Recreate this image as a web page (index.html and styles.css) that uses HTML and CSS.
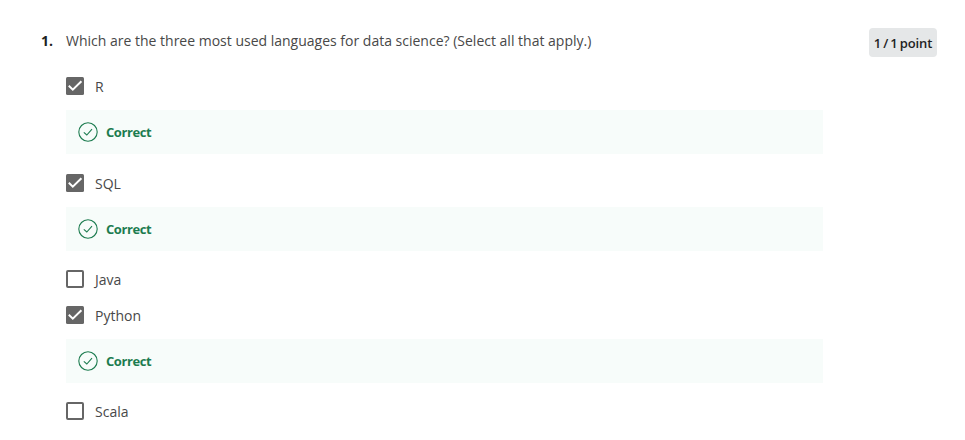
FILE: index.html
```html
<!DOCTYPE html>
<html lang="en">
<head>
<meta charset="utf-8">
<title>Quiz</title>
<link rel="stylesheet" href="styles.css">
</head>
<body>
<svg class="defs" aria-hidden="true">
  <symbol id="checked" viewBox="0 0 18 18"><rect width="18" height="18" rx="1.5" fill="#666"/><path d="M2.8 8.8 6.8 12.6 15.4 4.2" fill="none" stroke="#fff" stroke-width="2"/></symbol>
  <symbol id="unchecked" viewBox="0 0 18 18"><rect x="1" y="1" width="16" height="16" rx="1" fill="#fff" stroke="#666" stroke-width="2"/></symbol>
  <symbol id="correct" viewBox="0 0 20 20"><circle cx="10" cy="10" r="9.2" fill="none" stroke="#1d7c50" stroke-width="1.1"/><path d="M5.8 10.3 8.8 13 14 7.2" fill="none" stroke="#1d7c50" stroke-width="1.1"/></symbol>
</svg>
<main class="question">
  <span class="number">1.</span>
  <section class="body">
    <h1 class="prompt">Which are the three most used languages for data science? (Select all that apply.)</h1>
    <div class="option"><svg class="box"><use href="#checked"/></svg><span class="label">R</span></div>
    <div class="feedback"><svg class="tick"><use href="#correct"/></svg><span>Correct</span></div>
    <div class="option"><svg class="box"><use href="#checked"/></svg><span class="label">SQL</span></div>
    <div class="feedback"><svg class="tick"><use href="#correct"/></svg><span>Correct</span></div>
    <div class="option"><svg class="box"><use href="#unchecked"/></svg><span class="label">Java</span></div>
    <div class="option"><svg class="box"><use href="#checked"/></svg><span class="label">Python</span></div>
    <div class="feedback"><svg class="tick"><use href="#correct"/></svg><span>Correct</span></div>
    <div class="option"><svg class="box"><use href="#unchecked"/></svg><span class="label">Scala</span></div>
  </section>
  <div class="points">1 / 1 point</div>
</main>
</body>
</html>
```
FILE: styles.css
```css
* { box-sizing: border-box; }
body {
  margin: 0;
  background: #fff;
  color: #484848;
  font: 14px/20px "Open Sans", sans-serif;
}
.defs { display: none; }
.question {
  display: grid;
  grid-template-columns: 25px 757px 114px;
  align-items: start;
  padding: 31px 0 0 41px;
}
.number { font-weight: 700; color: #1f1f1f; }
.prompt {
  margin: 0 0 26.3px;
  font-size: 14px;
  font-weight: 400;
}
.option {
  display: flex;
  align-items: center;
  gap: 11px;
  height: 18px;
  margin-bottom: 18px;
}
.box { width: 18px; height: 18px; flex: none; }
.label { margin-top: 2px; }
.feedback {
  display: flex;
  align-items: center;
  gap: 8px;
  height: 44px;
  margin: -3px 0 19.3px;
  padding-left: 12px;
  background: #f7fcfa;
  color: #1d7c50;
  font-size: 13px;
  font-weight: 700;
  letter-spacing: -0.42px;
}
.tick { width: 20px; height: 20px; flex: none; }
.points {
  margin: -3px 0 0 46px;
  width: 68px;
  height: 29px;
  border-radius: 4px;
  background: #e5e7e8;
  color: #1f1f1f;
  font: 600 13px/31px "Open Sans", sans-serif;
  letter-spacing: -0.1px;
  word-spacing: -1.2px;
  text-align: center;
  white-space: nowrap;
}
```
